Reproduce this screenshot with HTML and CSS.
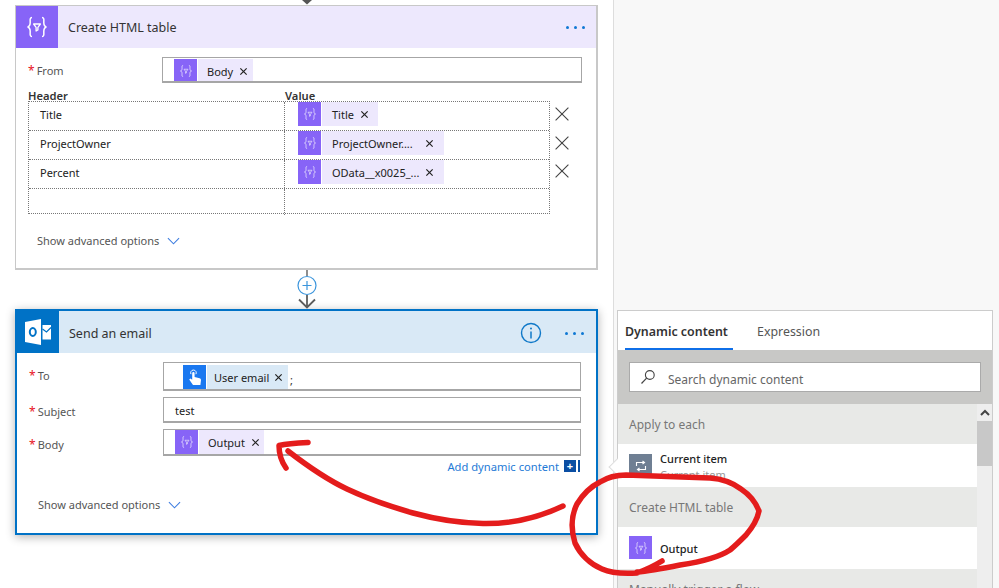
FILE: index.html
```html
<!DOCTYPE html>
<html lang="en">
<head>
    <meta charset="UTF-8">
    <meta name="viewport" content="width=device-width, initial-scale=1.0">
    <title>Send an email - Flow designer</title>
    <link rel="stylesheet" href="styles.css">
</head>
<body>
    <svg class="defs" aria-hidden="true">
        <symbol id="ico-data" viewBox="0 0 24 24">
            <path d="M7 2.5C4.6 2.5 5.2 5 5.2 7.5C5.2 10 4.6 11.5 2.6 12C4.6 12.5 5.2 14 5.2 16.5C5.2 19 4.6 21.5 7 21.5" fill="none" stroke="currentColor" stroke-width="1.5"/>
            <path d="M17 2.5C19.4 2.5 18.8 5 18.8 7.5C18.8 10 19.4 11.5 21.4 12C19.4 12.5 18.8 14 18.8 16.5C18.8 19 19.4 21.5 17 21.5" fill="none" stroke="currentColor" stroke-width="1.5"/>
            <path d="M8.6 9H15.4L12.9 12.4V15L11.1 16V12.4Z" fill="none" stroke="currentColor" stroke-width="1.3" stroke-linejoin="round"/>
        </symbol>
        <symbol id="ico-x" viewBox="0 0 10 10">
            <path d="M1.5 1.5L8.5 8.5M8.5 1.5L1.5 8.5" fill="none" stroke="currentColor" stroke-width="1.3"/>
        </symbol>
        <symbol id="ico-close" viewBox="0 0 10 10">
            <path d="M1 1L9 9M9 1L1 9" fill="none" stroke="currentColor" stroke-width="0.7"/>
        </symbol>
        <symbol id="ico-chevron" viewBox="0 0 14 8">
            <path d="M1 1L7 7L13 1" fill="none" stroke="currentColor" stroke-width="1.2"/>
        </symbol>
    </svg>

    <div class="page">
        <main class="canvas">
            <div class="stub">
                <svg width="12" height="5" viewBox="0 0 12 5"><path d="M1 0L6 4.5L11 0Z" fill="#555"/></svg>
            </div>

            <section class="card card-table">
                <header class="card-head head-purple">
                    <div class="head-icon icon-purple"><svg width="24" height="24"><use href="#ico-data"/></svg></div>
                    <h2 class="card-title">Create HTML table</h2>
                    <div class="dots"><i></i><i></i><i></i></div>
                </header>
                <div class="card-body">
                    <div class="field field-from">
                        <label class="field-label"><span class="req">*</span>From</label>
                        <div class="input">
                            <span class="token token-body">
                                <span class="token-icon"><svg width="14" height="14"><use href="#ico-data"/></svg></span>
                                <span class="token-text">Body</span>
                                <svg class="token-x" width="9" height="9"><use href="#ico-x"/></svg>
                            </span>
                        </div>
                    </div>

                    <div class="kv-head"><span>Header</span><span>Value</span></div>
                    <div class="kv-wrap">
                        <div class="kv-table">
                            <div class="kv-row">
                                <div class="kv-key">Title</div>
                                <div class="kv-val">
                                    <span class="token token-short">
                                        <span class="token-icon"><svg width="14" height="14"><use href="#ico-data"/></svg></span>
                                        <span class="token-text">Title</span>
                                        <svg class="token-x" width="9" height="9"><use href="#ico-x"/></svg>
                                    </span>
                                </div>
                            </div>
                            <div class="kv-row">
                                <div class="kv-key">ProjectOwner</div>
                                <div class="kv-val">
                                    <span class="token token-long">
                                        <span class="token-icon"><svg width="14" height="14"><use href="#ico-data"/></svg></span>
                                        <span class="token-text">ProjectOwner....</span>
                                        <svg class="token-x" width="9" height="9"><use href="#ico-x"/></svg>
                                    </span>
                                </div>
                            </div>
                            <div class="kv-row">
                                <div class="kv-key">Percent</div>
                                <div class="kv-val">
                                    <span class="token token-long">
                                        <span class="token-icon"><svg width="14" height="14"><use href="#ico-data"/></svg></span>
                                        <span class="token-text">OData__x0025_...</span>
                                        <svg class="token-x" width="9" height="9"><use href="#ico-x"/></svg>
                                    </span>
                                </div>
                            </div>
                            <div class="kv-row kv-empty">
                                <div class="kv-key"></div>
                                <div class="kv-val"></div>
                            </div>
                        </div>
                        <div class="kv-remove">
                            <svg width="16" height="16"><use href="#ico-close"/></svg>
                            <svg width="16" height="16"><use href="#ico-close"/></svg>
                            <svg width="16" height="16"><use href="#ico-close"/></svg>
                        </div>
                    </div>

                    <div class="advanced">Show advanced options <svg width="13" height="8"><use href="#ico-chevron"/></svg></div>
                </div>
            </section>

            <div class="connector">
                <svg width="20" height="39" viewBox="0 0 20 39">
                    <path d="M10 0V6" stroke="#444" stroke-width="1.2"/>
                    <circle cx="10" cy="15.5" r="9" fill="#fff" stroke="#3b95dc" stroke-width="1.2"/>
                    <path d="M10 11V20M5.5 15.5H14.5" stroke="#3b95dc" stroke-width="1.2"/>
                    <path d="M10 25V38M2 29.5L10 37.5L18 29.5" fill="none" stroke="#5c5c5c" stroke-width="1.8"/>
                </svg>
            </div>

            <section class="card card-email">
                <header class="card-head head-blue">
                    <div class="head-icon icon-blue">
                        <svg width="30" height="28" viewBox="0 0 30 28">
                            <path d="M2 4L18 1V27L2 24Z" fill="#fff"/>
                            <ellipse cx="9.8" cy="14" rx="3" ry="3.9" fill="none" stroke="#0072c6" stroke-width="2"/>
                            <path d="M19.5 7L28 7V21.5H19.5Z" fill="#fff"/>
                            <path d="M19.5 11L23.5 14L28 9.5" fill="none" stroke="#0072c6" stroke-width="1.2"/>
                        </svg>
                    </div>
                    <h2 class="card-title">Send an email</h2>
                    <svg class="info" width="22" height="22" viewBox="0 0 22 22">
                        <circle cx="11" cy="11" r="9.5" fill="none" stroke="#0f78c8" stroke-width="1.4"/>
                        <path d="M11 9.5V16.5" stroke="#0f78c8" stroke-width="1.5"/>
                        <circle cx="11" cy="6.5" r="1" fill="#0f78c8"/>
                    </svg>
                    <div class="dots"><i></i><i></i><i></i></div>
                </header>
                <div class="card-body">
                    <div class="field field-to">
                        <label class="field-label"><span class="req">*</span>To</label>
                        <div class="input">
                            <span class="token token-user">
                                <span class="token-icon icon-touch">
                                    <svg width="14" height="17" viewBox="0 0 14 17">
                                        <path d="M5 16L1.2 10.5L2.4 9.4L4.2 10.8V4.2A1.2 1.2 0 0 1 6.6 4.2V8L11.6 9.2C12.6 9.5 13 10 13 11L12.4 16Z" fill="#fff"/>
                                        <path d="M3 5.2A2.8 2.8 0 1 1 7.9 5.2" fill="none" stroke="#fff" stroke-width="1"/>
                                    </svg>
                                </span>
                                <span class="token-text">User email</span>
                                <svg class="token-x" width="9" height="9"><use href="#ico-x"/></svg>
                            </span>
                            <span class="semi">;</span>
                        </div>
                    </div>
                    <div class="field field-subject">
                        <label class="field-label"><span class="req">*</span>Subject</label>
                        <div class="input"><span class="plain">test</span></div>
                    </div>
                    <div class="field field-bodytext">
                        <label class="field-label"><span class="req">*</span>Body</label>
                        <div class="input">
                            <span class="token token-output">
                                <span class="token-icon"><svg width="14" height="14"><use href="#ico-data"/></svg></span>
                                <span class="token-text">Output</span>
                                <svg class="token-x" width="9" height="9"><use href="#ico-x"/></svg>
                            </span>
                        </div>
                    </div>
                    <div class="add-dynamic">
                        <span>Add dynamic content</span>
                        <span class="add-btn">+</span>
                    </div>
                    <div class="advanced">Show advanced options <svg width="13" height="8"><use href="#ico-chevron"/></svg></div>
                </div>
            </section>
        </main>

        <aside class="side">
            <div class="panel">
                <div class="notch"></div>
                <div class="tabs">
                    <div class="tab tab-active">Dynamic content</div>
                    <div class="tab">Expression</div>
                </div>
                <div class="search-band">
                    <div class="search">
                        <svg width="16" height="16" viewBox="0 0 16 16">
                            <circle cx="9.8" cy="6" r="4.4" fill="none" stroke="#444" stroke-width="1.1"/>
                            <path d="M6.6 9.2L1.5 14.5" stroke="#444" stroke-width="1.2"/>
                        </svg>
                        <span>Search dynamic content</span>
                    </div>
                </div>
                <div class="list-wrap">
                    <div class="list">
                        <div class="group">Apply to each</div>
                        <div class="item">
                            <span class="item-icon icon-loop">
                                <svg width="14" height="14" viewBox="0 0 14 14">
                                    <path d="M2.5 7V3.5H10M8.5 2L10.5 3.5L8.5 5M11.5 7V10.5H4M5.5 9L3.5 10.5L5.5 12" fill="none" stroke="#fff" stroke-width="1.1"/>
                                </svg>
                            </span>
                            <div class="item-text">
                                <div class="item-name">Current item</div>
                                <div class="item-sub">Current item</div>
                            </div>
                        </div>
                        <div class="group">Create HTML table</div>
                        <div class="item item-short">
                            <span class="item-icon"><svg width="14" height="14"><use href="#ico-data"/></svg></span>
                            <div class="item-text">
                                <div class="item-name">Output</div>
                            </div>
                        </div>
                        <div class="group">Manually trigger a flow</div>
                    </div>
                    <div class="scrollbar">
                        <div class="scroll-up">
                            <svg width="10" height="7" viewBox="0 0 10 7"><path d="M1 6L5 2L9 6" fill="none" stroke="#444" stroke-width="2"/></svg>
                        </div>
                        <div class="scroll-thumb"></div>
                    </div>
                </div>
            </div>
        </aside>
    </div>

    <!-- red marker scribbles drawn over the screenshot -->
    <svg class="scribble" width="999" height="588" viewBox="0 0 999 588">
        <g fill="none" stroke="#e41c1c" stroke-width="5.5" stroke-linecap="round" stroke-linejoin="round">
            <path d="M308 442.5C298 443 288 443.5 279 445.5C279 453 281 461 286 468"/>
            <path d="M288 451C310 468 328 480 347 489C368 499 392 507 413 513C435 519 460 523 483 523.5C512 524 540 517 563 506"/>
            <path d="M662 561C654 566 645 570 637 573C622 574 611 573 602 569C590 564 580 554 575 543C571 530 571 516 577 504C583 494 590 487 600 482C608 477 616 475 626 475C650 476 680 477 710 478C724 479 733 483 741 489C750 495 756 503 759 511C757 521 752 528 746 535C740 541 735 546 730 550C718 558 700 562 680 565C665 568 650 571 637 572"/>
        </g>
    </svg>
</body>
</html>
```

FILE: styles.css
```css
* {
    box-sizing: border-box;
}

html, body {
    margin: 0;
    height: 100%;
}

body {
    font-family: "Noto Sans", "Open Sans", sans-serif;
    font-size: 11px;
    color: #333;
    background: #fff;
    overflow: hidden;
    position: relative;
}

.defs {
    width: 0;
    height: 0;
    position: absolute;
}

.page {
    display: flex;
    width: 999px;
    height: 588px;
}

.canvas {
    width: 614px;
    flex: none;
    padding-left: 15px;
    background: #fff;
    border-right: 1px solid #ddd;
}

.stub {
    width: 583px;
    height: 5px;
    display: flex;
    justify-content: center;
}

.stub svg {
    display: block;
}

.card {
    width: 583px;
    background: #fff;
}

.card-table {
    height: 265px;
    border: 1px solid #c8c8c8;
    border-width: 1px 2px 2px 1px;
}

.card-email {
    height: 226px;
    border: 2px solid #0072c6;
    box-shadow: 0 2px 9px rgba(0, 0, 0, 0.3);
}

.connector {
    width: 583px;
    height: 39px;
    display: flex;
    justify-content: center;
}

.connector svg {
    display: block;
}

.card-head {
    height: 42px;
    display: flex;
    align-items: center;
}

.head-purple {
    background: #ede8fd;
}

.head-blue {
    background: #d9e9f6;
}

.head-icon {
    width: 42px;
    height: 42px;
    flex: none;
    display: flex;
    align-items: center;
    justify-content: center;
    color: #fff;
}

.icon-purple {
    background: #8764f7;
}

.icon-blue {
    background: #0072c6;
}

.card-title {
    margin: 0 0 0 10px;
    flex: 1;
    font-size: 12.5px;
    font-weight: 400;
    color: #333;
}

.head-blue .card-title,
.head-blue .info,
.head-blue .dots {
    margin-top: 2px;
}

.info {
    margin-right: 23px;
}

.dots {
    display: flex;
    gap: 5px;
    margin-right: 12px;
}

.card-table .dots {
    margin-right: 11px;
}

.dots i {
    width: 3px;
    height: 3px;
    border-radius: 50%;
    background: #0f78d4;
}

.card-body {
    padding: 9px 0 0 12px;
}

.field {
    display: flex;
    align-items: flex-start;
}

.field-label {
    width: 134px;
    flex: none;
    padding-top: 5px;
    color: #555;
}

.req {
    color: #e81123;
    margin-right: 2px;
    font-size: 12px;
}

.input {
    width: 420px;
    height: 26px;
    border: 1px solid #a6a6a6;
    border-bottom-width: 2px;
    display: flex;
    align-items: flex-start;
    padding-left: 11px;
    background: #fff;
    overflow: hidden;
}

.token {
    display: inline-flex;
    align-items: center;
    height: 24px;
    background: #ede8fd;
    color: #222;
    flex: none;
}

.token-icon {
    width: 24px;
    height: 24px;
    flex: none;
    display: flex;
    align-items: center;
    justify-content: center;
    background: #8764f7;
    color: #e3dcfd;
    border-right: 1px solid #fff;
}

.token-text {
    margin-left: 9px;
    white-space: nowrap;
}

.token-x {
    flex: none;
    color: #222;
    margin-left: 6px;
}

.token-body {
    width: 79px;
    margin-top: 1px;
}

.kv-head {
    display: flex;
    height: 18px;
    padding-top: 7px;
    line-height: 12px;
    font-size: 11.2px;
    font-weight: 600;
    color: #333;
}

.kv-head span:first-child {
    width: 257px;
}

.kv-wrap {
    display: flex;
}

.kv-table {
    width: 522px;
    height: 113px;
    border: 1px dotted #777;
    flex: none;
}

.kv-row {
    display: flex;
    height: 29px;
    border-bottom: 1px dotted #777;
}

.kv-empty {
    height: 26px;
    border-bottom: none;
}

.kv-key {
    width: 256px;
    flex: none;
    padding: 5px 0 0 11px;
    border-right: 1px dotted #777;
    color: #222;
}

.kv-val {
    flex: 1;
    padding-left: 13px;
}

.kv-val .token-text {
    margin-left: 10px;
}

.token-short {
    width: 80px;
}

.token-long {
    width: 146px;
}

.token-long .token-x {
    margin-left: auto;
    margin-right: 10px;
}

.kv-remove {
    display: flex;
    flex-direction: column;
    gap: 12.5px;
    margin: 5px 0 0 4px;
    color: #444;
}

.advanced {
    display: flex;
    align-items: center;
    gap: 8px;
    margin: 19px 0 0 9px;
    color: #555;
}

.advanced svg {
    color: #3f7ee0;
}

.card-email .input {
    width: 418px;
}

.field-to .input {
    height: 29px;
    padding-left: 19px;
    padding-top: 2px;
}

.field-subject {
    margin-top: 6px;
}

.field-subject .field-label {
    padding-top: 6px;
}

.field-bodytext {
    margin-top: 6px;
}

.field-bodytext .field-label {
    padding-top: 7px;
}

.field-bodytext .input {
    height: 27px;
}

.token-user {
    width: 105px;
    background: #d9e9f6;
}

.token-user .token-text {
    margin-left: 7px;
}

.token-user .token-x {
    margin-left: 5px;
}

.icon-touch {
    background: #1a78f0;
}

.semi {
    margin: 7px 0 0 2px;
}

.plain {
    color: #222;
    padding-top: 5px;
}

.token-output {
    width: 89px;
}

.add-dynamic {
    width: 551px;
    display: flex;
    justify-content: flex-end;
    align-items: center;
    gap: 5px;
    height: 12px;
    margin-top: 4px;
    font-size: 11.2px;
    color: #1e7ad6;
}

.add-btn {
    width: 16px;
    height: 12px;
    padding-right: 4px;
    background: linear-gradient(to right, #0a4ea3 12px, #fff 12px, #fff 14px, #0a4ea3 14px);
    color: #fff;
    display: flex;
    align-items: center;
    justify-content: center;
    line-height: 12px;
    font-size: 11px;
    font-weight: 700;
}

.card-email .advanced {
    margin-top: 25px;
}

.side {
    flex: 1;
    background: #f8f8f8;
    padding: 310px 0 0 3px;
}

.panel {
    width: 376px;
    height: 278px;
    position: relative;
    background: #fff;
    border: 1px solid #ccc;
    border-bottom: none;
}

.notch {
    position: absolute;
    left: -7px;
    top: 150px;
    width: 12px;
    height: 12px;
    background: #fff;
    border: 1px solid #ddd;
    border-width: 0 0 1px 1px;
    transform: rotate(45deg);
}

.tabs {
    display: flex;
    gap: 24px;
    height: 39px;
    padding-left: 7px;
    background: #fff;
    position: relative;
}

.tab {
    height: 39px;
    padding-top: 12px;
    font-size: 12.4px;
    color: #555;
}

.tab-active {
    font-weight: 600;
    color: #333;
    border-bottom: 2px solid #0f6fe8;
    width: 108px;
}

.search-band {
    height: 54px;
    padding: 12px 12px 0 11px;
    background: #c8c8c6;
}

.search {
    width: 352px;
    height: 30px;
    display: flex;
    align-items: center;
    gap: 12px;
    padding-left: 10px;
    background: #fff;
    border: 1px solid #aaa;
    font-size: 12px;
    color: #666;
}

.search span {
    padding-top: 5px;
}

.list-wrap {
    display: flex;
    height: 184px;
    overflow: hidden;
}

.list {
    width: 359px;
    flex: none;
    background: #fff;
}

.group {
    height: 40px;
    padding: 12px 0 0 11px;
    background: #e8e9e7;
    font-size: 12px;
    color: #777;
}

.item {
    height: 43px;
    display: flex;
    gap: 8px;
    padding: 10px 0 0 11px;
    overflow: hidden;
}

.item-short {
    height: 42px;
    padding-top: 9px;
}

.item-icon {
    width: 23px;
    height: 23px;
    flex: none;
    display: flex;
    align-items: center;
    justify-content: center;
    background: #8764f7;
    color: #e3dcfd;
}

.icon-loop {
    background: #6f7f93;
}

.item-name {
    font-weight: 500;
    color: #222;
    line-height: 14px;
    margin-top: -2px;
}

.item-short .item-name {
    margin-top: 6px;
}

.item-sub {
    color: #999;
    line-height: 16px;
    margin-top: 1px;
}

.scrollbar {
    width: 16px;
    background: #eee;
}

.scroll-up {
    height: 17px;
    display: flex;
    align-items: center;
    justify-content: center;
}

.scroll-thumb {
    height: 45px;
    background: #c8c8c8;
}

.scribble {
    position: absolute;
    left: 0;
    top: 0;
    pointer-events: none;
}
```
